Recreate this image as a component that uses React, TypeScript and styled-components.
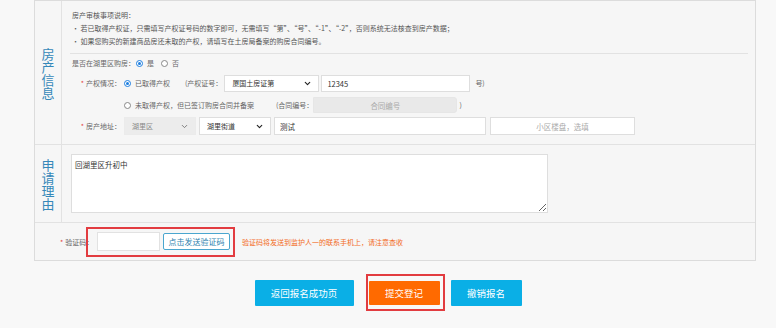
import React from 'react'
import styled, { createGlobalStyle } from 'styled-components'
import { ChevronDown } from 'lucide-react'

const GlobalStyle = createGlobalStyle`
	body {
		margin: 0;
		background: #f8f8f8;
		font-family: "Noto Sans CJK SC", "Noto Sans", sans-serif;
		color: #555;
	}
`

const Page = styled.div`
	width: 776px;
`

const Panel = styled.div`
	width: 722px;
	margin-left: 34px;
	box-sizing: border-box;
	border: 1px solid #dcdcdc;
	background: #f6f6f6;
`

const Section = styled.div`
	display: flex;
	border-bottom: 1px solid #e2e2e2;
`

const SideLabel = styled.div`
	width: 26px;
	flex-shrink: 0;
	border-right: 1px solid #e2e2e2;
	display: flex;
	align-items: center;
	justify-content: center;
`

const SideText = styled.div`
	width: 13px;
	font-size: 13px;
	line-height: 13px;
	color: #3588b9;
	word-break: break-all;
`

const SectionBody = styled.div`
	flex: 1;
	padding: 0 7px 8px 8px;
`

const Notes = styled.div`
	padding: 8px 0 5px 2px;
	font-size: 7px;
	line-height: 13px;
	color: #555;
	border-bottom: 1px solid #e2e2e2;
`

const Row = styled.div<{ $h: number; $indent?: number }>`
	display: flex;
	align-items: center;
	height: ${(p) => p.$h}px;
	padding-left: ${(p) => 2 + (p.$indent || 0)}px;
	font-size: 7px;
	color: #666;
	white-space: nowrap;
`

const FieldLabel = styled.span`
	width: 52px;
	flex-shrink: 0;
	box-sizing: border-box;
	padding-right: 3px;
	text-align: right;
`

const Star = styled.span`
	color: #e43c3c;
	margin-right: 2px;
`

const Radio = styled.span<{ $checked?: boolean }>`
	width: 7px;
	height: 7px;
	box-sizing: border-box;
	border-radius: 50%;
	border: 1px solid ${(p) => (p.$checked ? '#1c7ee0' : '#888')};
	background: #fff;
	display: inline-flex;
	align-items: center;
	justify-content: center;
	margin-right: 4px;
	&::after {
		content: '';
		width: 3px;
		height: 3px;
		border-radius: 50%;
		background: ${(p) => (p.$checked ? '#1c7ee0' : 'transparent')};
	}
`

const Text = styled.span<{ $ml?: number }>`
	margin-left: ${(p) => p.$ml || 0}px;
`

const SelectBox = styled.div<{ $w: number; $h: number; $ml?: number; $disabled?: boolean }>`
	width: ${(p) => p.$w}px;
	height: ${(p) => p.$h}px;
	margin-left: ${(p) => p.$ml || 0}px;
	box-sizing: border-box;
	border: 1px solid ${(p) => (p.$disabled ? '#ebebeb' : '#dedede')};
	background: ${(p) => (p.$disabled ? '#ececec' : '#fff')};
	color: ${(p) => (p.$disabled ? '#888' : '#333')};
	display: flex;
	align-items: center;
	justify-content: space-between;
	padding: 0 6px 0 7px;
	font-size: 7px;
	svg {
		color: ${(p) => (p.$disabled ? '#777' : '#222')};
	}
`

const TextBox = styled.div<{ $w: number; $h: number; $ml?: number; $center?: boolean; $disabled?: boolean }>`
	width: ${(p) => p.$w}px;
	height: ${(p) => p.$h}px;
	margin-left: ${(p) => p.$ml || 0}px;
	box-sizing: border-box;
	border: 1px solid ${(p) => (p.$disabled ? '#e6e6e6' : '#dedede')};
	border-radius: ${(p) => (p.$disabled ? '0 3px 3px 0' : '0')};
	background: ${(p) => (p.$disabled ? '#e9e9e9' : '#fff')};
	color: ${(p) => (p.$center ? '#aaa' : '#333')};
	display: flex;
	align-items: center;
	justify-content: ${(p) => (p.$center ? 'center' : 'flex-start')};
	padding: 0 5px;
	font-size: 7.5px;
`

const ReasonBody = styled.div`
	flex: 1;
	padding: 9px 0 9px 9px;
`

const ReasonArea = styled.textarea`
	display: block;
	width: 477px;
	height: 59px;
	box-sizing: border-box;
	border: 1px solid #dedede;
	background: #fff;
	padding: 4px 3px;
	margin: 0;
	font-family: "Noto Sans CJK SC", sans-serif;
	font-size: 7.5px;
	line-height: 11px;
	color: #333;
	outline: none;
`

const VerifyRow = styled.div`
	position: relative;
	height: 37px;
	display: flex;
	align-items: center;
	padding-left: 25px;
	font-size: 7px;
	color: #666;
`

const VerifyLabel = styled.span`
	width: 37px;
`

const CodeInput = styled.div`
	width: 63px;
	height: 19px;
	box-sizing: border-box;
	border: 1px solid #e2e2e2;
	background: #fff;
`

const SendButton = styled.button`
	margin-left: 3px;
	width: 67px;
	height: 17px;
	box-sizing: border-box;
	border: 1px solid #4aa6cf;
	border-radius: 2px;
	background: #fff;
	color: #2d7fae;
	font-family: "Noto Sans CJK SC", sans-serif;
	font-size: 8px;
	padding: 0;
`

const Hint = styled.span`
	margin-left: 12px;
	color: #f36b1c;
`

const Highlight = styled.div`
	position: absolute;
	left: 51px;
	top: 4px;
	width: 149px;
	height: 30px;
	box-sizing: border-box;
	border: 2px solid #e23c40;
	pointer-events: none;
`

const ButtonBar = styled.div`
	margin-top: 13px;
	display: flex;
	align-items: center;
	justify-content: center;
`

const ActionButton = styled.button<{ $w: number; $h?: number; $color: string; $ml?: number }>`
	width: ${(p) => p.$w}px;
	height: ${(p) => p.$h || 26}px;
	margin-left: ${(p) => p.$ml || 0}px;
	border: none;
	border-radius: 1px;
	background: ${(p) => p.$color};
	color: #fff;
	font-family: "Noto Sans CJK SC", sans-serif;
	font-size: 9.5px;
	padding: 0;
`

const RedFrame = styled.div`
	margin-left: 12px;
	border: 2px solid #e23c40;
	padding: 5px 3px 4px 1px;
	display: flex;
`

const App = (): JSX.Element => {
	return (
		<>
			<GlobalStyle />
			<Page>
				<Panel>
					<Section>
						<SideLabel>
							<SideText>房产信息</SideText>
						</SideLabel>
						<SectionBody>
							<Notes>
								<div>房产审核事项说明：</div>
								<div>
									• 若已取得产权证，只需填写产权证号码的数字即可，无需填写“第”、“号”、“-1”、“-2”，否则系统无法核查到房产数据；
								</div>
								<div>• 如果您购买的新建商品房还未取的产权，请填写在土房局备案的购房合同编号。</div>
							</Notes>

							<Row $h={18}>
								<Text>是否在湖里区购房：</Text>
								<Radio $checked style={{ marginLeft: 1 }} />
								<Text>是</Text>
								<Radio style={{ marginLeft: 7 }} />
								<Text>否</Text>
							</Row>

							<Row $h={22}>
								<FieldLabel>
									<Star>*</Star>产权情况：
								</FieldLabel>
								<Radio $checked />
								<Text>已取得产权</Text>
								<Text $ml={15}>(产权证号：</Text>
								<SelectBox $w={95} $h={17} $ml={2}>
									<span>厦国土房证第</span>
									<ChevronDown size={9} strokeWidth={3} />
								</SelectBox>
								<TextBox $w={149} $h={17} $ml={2}>
									12345
								</TextBox>
								<Text $ml={5}>号)</Text>
							</Row>

							<Row $h={22} $indent={52}>
								<Radio />
								<Text>未取得产权，但已签订购房合同并备案</Text>
								<Text $ml={22}>(合同编号：</Text>
								<TextBox $w={144} $h={16} $center $disabled>
									合同编号
								</TextBox>
								<Text $ml={2}>)</Text>
							</Row>

							<Row $h={20}>
								<FieldLabel>
									<Star>*</Star>房产地址：
								</FieldLabel>
								<SelectBox $w={72} $h={18} $disabled>
									<span>湖里区</span>
									<ChevronDown size={9} strokeWidth={2.5} />
								</SelectBox>
								<SelectBox $w={72} $h={18} $ml={3}>
									<span>湖里街道</span>
									<ChevronDown size={9} strokeWidth={3} />
								</SelectBox>
								<TextBox $w={212} $h={18} $ml={3}>
									测试
								</TextBox>
								<TextBox $w={145} $h={18} $ml={4} $center>
									小区楼盘，选填
								</TextBox>
							</Row>
						</SectionBody>
					</Section>

					<Section>
						<SideLabel>
							<SideText>申请理由</SideText>
						</SideLabel>
						<ReasonBody>
							<ReasonArea defaultValue='回湖里区升初中' />
						</ReasonBody>
					</Section>

					<VerifyRow>
						<VerifyLabel>
							<Star>*</Star>验证码：
						</VerifyLabel>
						<CodeInput />
						<SendButton>点击发送验证码</SendButton>
						<Hint>验证码将发送到监护人一的联系手机上，请注意查收</Hint>
						<Highlight />
					</VerifyRow>
				</Panel>

				<ButtonBar>
					<ActionButton $w={99} $color='#0aafe6'>
						返回报名成功页
					</ActionButton>
					<RedFrame>
						<ActionButton $w={71} $h={24} $color='#ff6a00'>
							提交登记
						</ActionButton>
					</RedFrame>
					<ActionButton $w={71} $ml={6} $color='#0aafe6'>
						撤销报名
					</ActionButton>
				</ButtonBar>
			</Page>
		</>
	)
}

export default App
